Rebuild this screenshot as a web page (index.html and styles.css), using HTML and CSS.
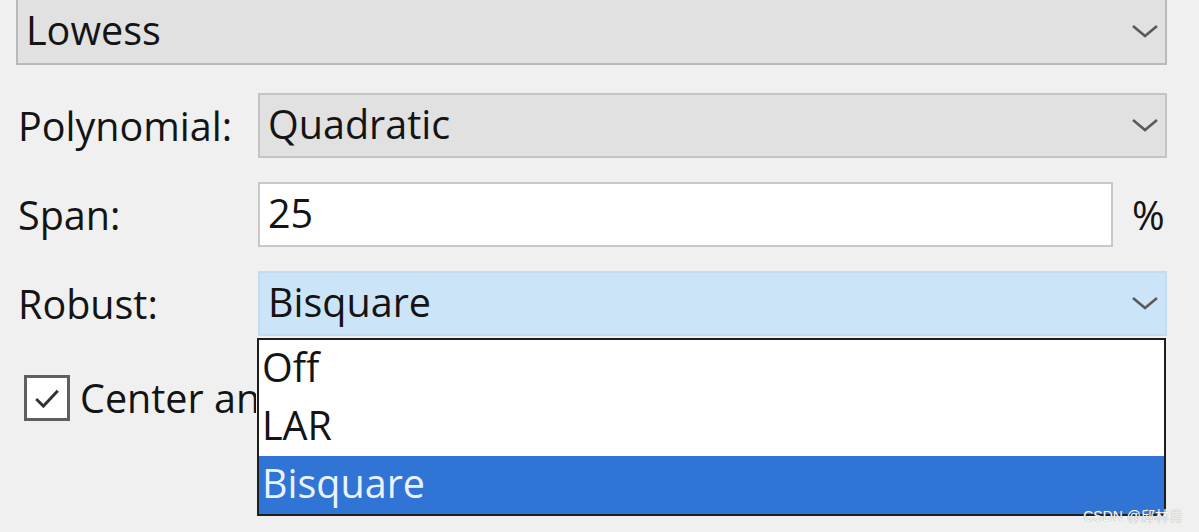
FILE: index.html
```html
<!DOCTYPE html>
<html>
<head>
<meta charset="utf-8">
<link rel="stylesheet" href="styles.css">
</head>
<body>
<div class="panel">
  <div class="combo combo-top">
    <span class="value">Lowess</span>
    <svg class="chev" viewBox="0 0 28 14"><path d="M2 2 L14 12 L26 2" /></svg>
  </div>

  <div class="row row-poly">
    <span class="label">Polynomial:</span>
    <div class="combo">
      <span class="value">Quadratic</span>
      <svg class="chev" viewBox="0 0 28 14"><path d="M2 2 L14 12 L26 2" /></svg>
    </div>
  </div>

  <div class="row row-span">
    <span class="label">Span:</span>
    <div class="field"><span class="value">25</span></div>
    <span class="unit">%</span>
  </div>

  <div class="row row-robust">
    <span class="label">Robust:</span>
    <div class="combo combo-focus">
      <span class="value">Bisquare</span>
      <svg class="chev" viewBox="0 0 28 14"><path d="M2 2 L14 12 L26 2" /></svg>
    </div>
    <ul class="dropdown">
      <li class="item">Off</li>
      <li class="item">LAR</li>
      <li class="item selected">Bisquare</li>
    </ul>
  </div>

  <div class="check-row">
    <span class="checkbox">
      <svg viewBox="0 0 40 40"><path d="M8 21 L16 29 L32 12" /></svg>
    </span>
    <span class="check-label">Center and scale</span>
  </div>
</div>
<div class="watermark">CSDN @邱林青</div>
</body>
</html>
```
FILE: styles.css
```css
html, body {
  margin: 0;
  padding: 0;
  background: #f0f0f0;
  width: 1199px;
  height: 532px;
  overflow: hidden;
  position: relative;
  font-family: "Open Sans", "Noto Sans", sans-serif;
  color: #141414;
}

.panel {
  display: flex;
  flex-direction: column;
  padding-left: 16px;
  width: 1151px;
}

.combo {
  box-sizing: border-box;
  height: 65px;
  background: #e1e1e1;
  border: 2px solid #c4c4c4;
  display: flex;
  align-items: center;
  justify-content: space-between;
  padding: 0 6px 2px 8px;
  flex: 1;
}

.combo-top {
  margin-top: -2px;
  height: 67px;
  flex: none;
  border-color: #b9b9b9;
}

.value {
  font-size: 39.5px;
  line-height: 1;
}

.chev {
  width: 28px;
  height: 14px;
  margin-right: 0;
}
.chev path {
  fill: none;
  stroke: #5a5a5a;
  stroke-width: 2.6;
}

.row {
  display: flex;
  align-items: center;
  position: relative;
}

.label {
  width: 242px;
  flex: none;
  font-size: 39.5px;
  padding-left: 2px;
  box-sizing: border-box;
}

.row-poly { margin-top: 28px; }
.row-span { margin-top: 24px; height: 65px; }
.row-robust { margin-top: 24px; }

.field {
  box-sizing: border-box;
  width: 855px;
  height: 65px;
  background: #fff;
  border: 2px solid #c8c8c8;
  display: flex;
  align-items: center;
  padding: 0 8px 2px 8px;
}

.unit {
  font-size: 39.5px;
  margin-left: 19px;
}

.combo-focus {
  background: #cce4f7;
  border-color: #c3dcf2;
}

.dropdown {
  position: absolute;
  left: 241px;
  top: 67px;
  width: 909px;
  margin: 0;
  padding: 0;
  list-style: none;
  background: #fff;
  border: 2px solid #1e1e1e;
  box-sizing: border-box;
  z-index: 5;
}

.item {
  height: 58px;
  box-sizing: border-box;
  padding-left: 3px;
  font-size: 39.5px;
  display: flex;
  align-items: center;
  padding-bottom: 4px;
}

.item.selected {
  background: #3074d5;
  color: #eaf2ff;
}

.check-row {
  display: flex;
  align-items: center;
  margin-top: 35px;
  padding-left: 8px;
}

.checkbox {
  box-sizing: border-box;
  width: 46px;
  height: 46px;
  border: 3px solid #5f5f5f;
  background: #fff;
  display: flex;
  align-items: center;
  justify-content: center;
  flex: none;
}
.checkbox svg {
  width: 36px;
  height: 36px;
}
.checkbox path {
  fill: none;
  stroke: #333;
  stroke-width: 3.2;
}

.check-label {
  font-size: 39.5px;
  margin-left: 10px;
  width: 176px;
  overflow: hidden;
  white-space: nowrap;
}

.watermark {
  position: absolute;
  right: 16px;
  bottom: 7px;
  font-family: "Liberation Sans", "Noto Sans CJK SC", sans-serif;
  font-size: 14px;
  color: #f6f6f6;
  text-shadow: 0 0 1px #888;
  z-index: 10;
}
```
